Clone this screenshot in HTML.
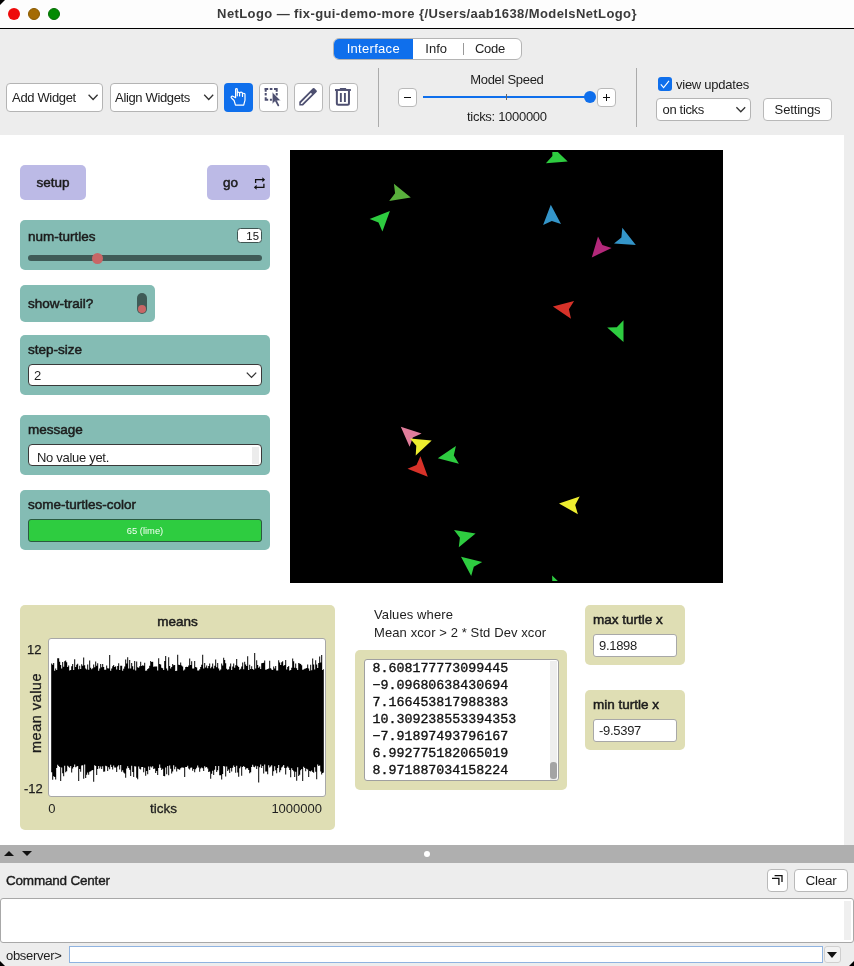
<!DOCTYPE html>
<html><head><meta charset="utf-8">
<style>
*{box-sizing:border-box;margin:0;padding:0}
html,body{-webkit-font-smoothing:antialiased;width:854px;height:966px;overflow:hidden;background:#ededed;font-family:"Liberation Sans",sans-serif;color:#1e1e1e}
.a{position:absolute}
#title{left:0;top:0;width:854px;height:29px;background:#fdfdfd;border-bottom:1px solid #000}
.dot{position:absolute;width:12px;height:12px;border-radius:50%;top:8px}
#ttl{left:0;width:854px;top:6px;text-align:center;font-weight:bold;font-size:13px;letter-spacing:0.4px;color:#3a3a3a}
.btn{position:absolute;background:#fff;border:1px solid #b9b9b9;border-radius:4px}
.sel{position:absolute;background:#fff;border:1px solid #b4b4b4;border-radius:4px;font-size:13.5px;color:#222}
.chev{position:absolute;width:7px;height:7px;border-right:1.5px solid #333;border-bottom:1.5px solid #333;transform:rotate(45deg)}
.vsep{position:absolute;width:1px;background:#ababab}
.txt{position:absolute;white-space:nowrap}
#iface{left:0;top:135px;width:844px;height:710px;background:#fff}
.w{position:absolute;border-radius:5px}
.teal{background:#84bcb4}
.lav{background:#bcbae6}
.beige{background:#dfdeb4}
.lbl{position:absolute;font-size:13.5px;-webkit-text-stroke:0.5px #1c1c1c;color:#1c1c1c;white-space:nowrap}
#root{position:absolute;left:0;top:0;width:854px;height:966px;will-change:transform}
</style></head><body><div id="root">
<div id="title" class="a">
  <div class="a" style="left:0;top:0;width:0;height:0;border-top:5px solid #000;border-right:5px solid transparent"></div>
  <div class="dot" style="left:8px;background:#ee0a0a"></div>
  <div class="dot" style="left:28px;background:#a46b04;border:1px solid #8a5a00"></div>
  <div class="dot" style="left:48px;background:#038a03;border:1px solid #066f06"></div>
  <div id="ttl" class="a">NetLogo — fix-gui-demo-more {/Users/aab1638/ModelsNetLogo}</div>
</div>

<!-- tabs -->
<div class="a" style="left:332.8px;top:37.8px;width:189px;height:22px;border:1px solid #b4b4b4;border-radius:6px;background:#fff;overflow:hidden">
  <div class="a" style="left:0;top:0;width:79px;height:20px;background:#0f6fec"></div>
  <div class="txt" style="left:0;width:79px;text-align:center;top:2.2px;font-size:13px;letter-spacing:0.3px;color:#fff">Interface</div>
  <div class="txt" style="left:77.4px;width:50px;text-align:center;top:2.2px;font-size:13px;color:#222">Info</div>
  <div class="a" style="left:129.3px;top:4.4px;width:1px;height:12.3px;background:#999"></div>
  <div class="txt" style="left:127.7px;width:57px;text-align:center;top:2.2px;font-size:13px;letter-spacing:-0.3px;color:#222">Code</div>
</div>

<!-- toolbar -->
<div class="sel" style="left:6.3px;top:83.2px;width:96.5px;height:28.5px"><span class="txt" style="left:4.8px;top:5.7px;font-size:13px;letter-spacing:-0.35px">Add Widget</span><svg class="a" style="left:0;top:0" width="96" height="28"><path d="M81.6,10.8 L86.1,15.5 L90.6,10.8" fill="none" stroke="#333" stroke-width="1.3"/></svg></div>
<div class="sel" style="left:109.5px;top:83.2px;width:108.3px;height:28.5px"><span class="txt" style="left:4.6px;top:5.7px;font-size:13px;letter-spacing:-0.35px">Align Widgets</span><svg class="a" style="left:0;top:0" width="108" height="28"><path d="M93.2,10.8 L97.7,15.5 L102.2,10.8" fill="none" stroke="#333" stroke-width="1.3"/></svg></div>
<div class="a" style="left:224px;top:83px;width:29px;height:29px;background:#0f6fec;border-radius:4px"></div>
<div class="btn" style="left:259px;top:83px;width:29px;height:29px"></div>
<div class="btn" style="left:294px;top:83px;width:29px;height:29px"></div>
<div class="btn" style="left:329px;top:83px;width:29px;height:29px"></div>
<svg class="a" style="left:224px;top:83px" width="29" height="29" viewBox="0 0 29 29">
<path d="M11.6,14.4 V6.5 A0.85,0.85 0 0 1 13.3,6.5 V12.8 M13.3,10.3 A1.15,1.15 0 0 1 15.6,10.3 V13 M15.6,10.6 A1.45,1.45 0 0 1 18.5,10.6 V13.5 M18.5,11.5 A1.25,1.25 0 0 1 21,11.5 V17.2 L19.7,22.2 H11.5 L10.1,17.5 L7.7,15.2 A1.05,1.05 0 0 1 8.9,13.3 L11.6,14.7" fill="none" stroke="#fff" stroke-width="1.2" stroke-linejoin="round" stroke-linecap="round"/>
</svg>
<svg class="a" style="left:259px;top:83px" width="29" height="29" viewBox="0 0 29 29">
<path d="M5.5,6.1 H9.2 M10.8,6.1 H13.4 M15,6.1 H18.7 M17.7,5.1 V8.8 M17.7,10.1 V12.6 M6.7,5.1 V8.8 M6.7,10.1 V12.6 M6.7,14.2 V17.8 M5.7,16.8 H9.2 M10.9,16.8 H13.1" fill="none" stroke="#4d4f70" stroke-width="2"/>
<path d="M13.3,9.1 L21.6,17.4 L16.5,18 L13.3,20.9 Z" fill="#4d4f70" stroke="#fff" stroke-width="0.5"/>
<path d="M17,18 L19.3,22.4" fill="none" stroke="#4d4f70" stroke-width="1.8" stroke-linecap="round"/>
</svg>
<svg class="a" style="left:294px;top:83px" width="29" height="29" viewBox="0 0 29 29">
<g transform="translate(5.3,22.6) rotate(-45)">
<path d="M0,0 L2.65,-2.65 H21.8 a1.1,1.1 0 0 1 1.1,1.1 V1.55 a1.1,1.1 0 0 1 -1.1,1.1 H2.65 Z" fill="#4d4f70"/>
<path d="M2.1,0 L3.0,-0.85 H17.2 V0.85 H3.0 Z" fill="#fff"/>
</g>
</svg>
<svg class="a" style="left:329px;top:83px" width="29" height="29" viewBox="0 0 29 29">
<path d="M6,7 H21.9" fill="none" stroke="#4d4f70" stroke-width="1.9"/>
<path d="M11.4,5.7 H16.6" fill="none" stroke="#4d4f70" stroke-width="1.3" stroke-linecap="round"/>
<path d="M7.85,7.5 V20.3 a1.5,1.5 0 0 0 1.5,1.5 H18.45 a1.5,1.5 0 0 0 1.5,-1.5 V7.5" fill="none" stroke="#4d4f70" stroke-width="2"/>
<path d="M11.85,10.1 V18.9 M15.9,10.1 V18.9" fill="none" stroke="#4d4f70" stroke-width="1.9"/>
</svg>
<div class="vsep" style="left:378px;top:68px;height:59px"></div>

<!-- speed -->
<div class="txt" style="left:456.9px;width:100px;text-align:center;top:72px;font-size:13px;letter-spacing:-0.3px">Model Speed</div>
<div class="btn" style="left:398px;top:88px;width:19px;height:19px"></div>
<div class="a" style="left:404.1px;top:96.6px;width:6.6px;height:1.2px;background:#111"></div>
<div class="btn" style="left:597px;top:88px;width:19px;height:19px"></div>
<div class="a" style="left:603.3px;top:97px;width:6.6px;height:1.2px;background:#111"></div>
<div class="a" style="left:606px;top:94.1px;width:1.2px;height:7px;background:#111"></div>
<div class="a" style="left:423px;top:96px;width:167px;height:2px;background:#0f6fec"></div>
<div class="a" style="left:506px;top:93.8px;width:1px;height:6.6px;background:#666"></div>
<div class="a" style="left:584px;top:91px;width:12px;height:12px;border-radius:50%;background:#0f6fec"></div>
<div class="txt" style="left:446.9px;width:120px;text-align:center;top:109.4px;font-size:13px;letter-spacing:-0.3px">ticks: 1000000</div>
<div class="vsep" style="left:636px;top:68px;height:59px"></div>

<!-- view updates -->
<div class="a" style="left:658px;top:77px;width:14px;height:14px;background:#0f6fec;border-radius:3px"></div>
<svg class="a" style="left:658px;top:77px" width="14" height="14"><path d="M2.8,7.3 L5.6,10.6 L11,3.8" fill="none" stroke="#fff" stroke-width="1.1"/></svg>
<div class="txt" style="left:676px;top:76.6px;font-size:13px;letter-spacing:-0.25px">view updates</div>
<div class="sel" style="left:656.3px;top:98px;width:94.5px;height:22.6px"><span class="txt" style="left:5.3px;top:3.3px;font-size:13px;letter-spacing:-0.35px">on ticks</span><svg class="a" style="left:0;top:0" width="94" height="22"><path d="M79.4,8.3 L83.8,12.8 L88.2,8.3" fill="none" stroke="#333" stroke-width="1.3"/></svg></div>
<div class="btn" style="left:763px;top:98px;width:69px;height:22.6px"><span class="txt" style="left:0;width:67px;text-align:center;top:3.3px;font-size:13px;letter-spacing:-0.15px">Settings</span></div>

<!-- interface area -->
<div id="iface" class="a"></div>

<!-- widgets -->
<div class="w lav" style="left:20px;top:165px;width:66px;height:35px"><span class="lbl" style="left:0;width:66px;text-align:center;top:10.3px">setup</span></div>
<div class="w lav" style="left:207px;top:165px;width:63px;height:35px"><span class="lbl" style="left:16px;top:10.3px">go</span>
<svg class="a" style="left:47px;top:12px" width="12" height="14"><path d="M1.6,6 V2.7 H9 M9.9,6.8 V10.3 H2" fill="none" stroke="#111" stroke-width="1.3"/><path d="M8.4,0.2 L11.1,2.7 L8.4,5.2 Z M2.6,7.8 L-0.1,10.3 L2.6,12.8 Z" fill="#111"/></svg></div>

<div class="w teal" style="left:20px;top:220px;width:250px;height:49.5px">
  <span class="lbl" style="left:8px;top:9.3px">num-turtles</span>
  <div class="a" style="left:217.3px;top:8.1px;width:24.3px;height:15.3px;background:#fff;border:1.2px solid #3f5552;border-radius:3.5px"><span class="txt" style="left:8px;top:0.8px;font-size:11.3px;letter-spacing:0.2px;color:#111">15</span></div>
  <div class="a" style="left:8px;top:35.4px;width:234px;height:5.2px;background:#3f5b57;border-radius:3px"></div>
  <div class="a" style="left:72px;top:33px;width:11px;height:11px;border-radius:50%;background:#c86666"></div>
</div>

<div class="w teal" style="left:20px;top:285px;width:135px;height:36.5px">
  <span class="lbl" style="left:8px;top:11px">show-trail?</span>
  <div class="a" style="left:117.2px;top:7.9px;width:9.5px;height:20.8px;background:#3f5b57;border-radius:5px"></div>
  <div class="a" style="left:117.8px;top:19.8px;width:8.5px;height:8.5px;border-radius:50%;background:#c86666"></div>
</div>

<div class="w teal" style="left:20px;top:335px;width:250px;height:59.5px">
  <span class="lbl" style="left:8px;top:7px">step-size</span>
  <div class="a" style="left:8px;top:29.3px;width:234px;height:22.2px;background:#fff;border:1px solid #3a3a3a;border-radius:4px"><span class="txt" style="left:5px;top:3px;font-size:13px">2</span><svg class="a" style="left:0;top:0" width="232" height="20"><path d="M217.8,7.6 L222.5,12.4 L227.2,7.6" fill="none" stroke="#333" stroke-width="1.3"/></svg></div>
</div>

<div class="w teal" style="left:20px;top:415px;width:250px;height:59.7px">
  <span class="lbl" style="left:8px;top:7px">message</span>
  <div class="a" style="left:8px;top:29.3px;width:234px;height:22px;background:#fff;border:1px solid #3a3a3a;border-radius:4px"><span class="txt" style="left:8px;top:4.5px;font-size:13px;letter-spacing:-0.3px">No value yet.</span><div class="a" style="left:223px;top:1.5px;width:7px;height:17px;background:#ececec"></div></div>
</div>

<div class="w teal" style="left:20px;top:490px;width:250px;height:59.5px">
  <span class="lbl" style="left:8px;top:7px">some-turtles-color</span>
  <div class="a" style="left:8px;top:29.3px;width:234px;height:22.5px;background:#2ecc40;border:1px solid #2a5a40;border-radius:3px"><span class="txt" style="left:0;width:232px;text-align:center;top:4.4px;font-size:9.4px;color:#f4fff4">65 (lime)</span></div>
</div>

<!-- view -->
<div class="a" style="left:290px;top:150px;width:433px;height:433px;background:#000;overflow:hidden">
<svg width="433" height="433" style="position:absolute;left:0;top:0">
<defs><clipPath id="wc"><rect x="2" y="2" width="429" height="429"/></clipPath></defs>
<g clip-path="url(#wc)">
<polygon points="277.7,11.6 262.1,-3.6 262.4,6.0 255.9,13.2" fill="#2ecc40"/>
<polygon points="277.7,440.6 262.1,425.4 262.4,435.0 255.9,442.2" fill="#2ecc40"/>
<polygon points="120.8,47.5 103.9,33.7 105.1,43.3 99.2,51.0" fill="#59b03c"/>
<polygon points="99.9,61.0 79.6,69.0 88.5,72.6 92.4,81.5" fill="#2ecc40"/>
<polygon points="260.8,54.7 253.1,75.1 261.8,70.9 271.0,74.0" fill="#3495c9"/>
<polygon points="301.8,107.4 321.6,98.1 312.4,95.1 308.0,86.5" fill="#b3287a"/>
<polygon points="345.8,95.0 332.3,77.8 331.4,87.4 324.0,93.6" fill="#3495c9"/>
<polygon points="262.9,156.4 281.0,168.7 278.9,159.2 284.1,151.1" fill="#d73229"/>
<polygon points="333.5,192.1 333.5,170.3 326.8,177.3 317.2,177.6" fill="#2ecc40"/>
<polygon points="110.8,276.7 119.6,296.7 122.8,287.6 131.6,283.5" fill="#e07d9b"/>
<polygon points="141.7,290.5 120.0,288.4 126.3,295.7 125.7,305.4" fill="#eded2f"/>
<polygon points="147.8,308.3 168.9,313.8 163.8,305.6 165.9,296.1" fill="#2ecc40"/>
<polygon points="137.8,326.8 130.4,306.3 126.5,315.1 117.5,318.7" fill="#d73229"/>
<polygon points="269.0,353.4 287.9,364.3 285.2,355.0 289.7,346.5" fill="#eded2f"/>
<polygon points="185.6,383.4 164.0,380.1 169.9,387.7 168.8,397.3" fill="#2ecc40"/>
<polygon points="171.0,406.8 181.2,426.1 183.8,416.8 192.2,412.0" fill="#2ecc40"/>

</g>
</svg>
</div>

<!-- plot -->
<div class="w beige" style="left:20px;top:605px;width:315px;height:225px"></div>
<span class="lbl" style="left:120px;width:115px;text-align:center;top:614px">means</span>
<div class="a" style="left:48px;top:638px;width:278px;height:159px;background:#fff;border:1px solid #a8a8a8;border-radius:3px"></div>
<svg class="a" style="left:0;top:0" width="854" height="966">
<polygon points="51.2,663.6 52.2,663.6 52.2,664.8 53.2,664.8 53.2,663.0 54.2,663.0 54.2,670.8 55.2,670.8 55.2,668.4 56.2,668.4 56.2,670.0 57.2,670.0 57.2,658.2 58.2,658.2 58.2,658.3 59.2,658.3 59.2,661.8 60.2,661.8 60.2,665.0 61.2,665.0 61.2,668.6 62.2,668.6 62.2,661.9 63.2,661.9 63.2,666.7 64.2,666.7 64.2,661.2 65.2,661.2 65.2,660.6 66.2,660.6 66.2,662.2 67.2,662.2 67.2,667.0 68.2,667.0 68.2,665.6 69.2,665.6 69.2,670.5 70.2,670.5 70.2,669.9 71.2,669.9 71.2,666.3 72.2,666.3 72.2,664.0 73.2,664.0 73.2,669.9 74.2,669.9 74.2,659.3 75.2,659.3 75.2,667.1 76.2,667.1 76.2,664.7 77.2,664.7 77.2,663.8 78.2,663.8 78.2,669.2 79.2,669.2 79.2,665.7 80.2,665.7 80.2,669.1 81.2,669.1 81.2,664.2 82.2,664.2 82.2,665.8 83.2,665.8 83.2,657.5 84.2,657.5 84.2,665.3 85.2,665.3 85.2,668.5 86.2,668.5 86.2,669.5 87.2,669.5 87.2,664.6 88.2,664.6 88.2,669.8 89.2,669.8 89.2,660.4 90.2,660.4 90.2,667.7 91.2,667.7 91.2,669.3 92.2,669.3 92.2,668.2 93.2,668.2 93.2,664.5 94.2,664.5 94.2,667.3 95.2,667.3 95.2,661.4 96.2,661.4 96.2,665.8 97.2,665.8 97.2,663.3 98.2,663.3 98.2,670.7 99.2,670.7 99.2,668.4 100.2,668.4 100.2,664.1 101.2,664.1 101.2,667.3 102.2,667.3 102.2,664.1 103.2,664.1 103.2,667.1 104.2,667.1 104.2,669.8 105.2,669.8 105.2,669.8 106.2,669.8 106.2,665.5 107.2,665.5 107.2,668.3 108.2,668.3 108.2,668.6 109.2,668.6 109.2,655.1 110.2,655.1 110.2,670.8 111.2,670.8 111.2,668.4 112.2,668.4 112.2,666.2 113.2,666.2 113.2,664.9 114.2,664.9 114.2,667.0 115.2,667.0 115.2,666.2 116.2,666.2 116.2,669.4 117.2,669.4 117.2,666.1 118.2,666.1 118.2,663.3 119.2,663.3 119.2,670.1 120.2,670.1 120.2,665.8 121.2,665.8 121.2,665.7 122.2,665.7 122.2,670.7 123.2,670.7 123.2,668.8 124.2,668.8 124.2,666.5 125.2,666.5 125.2,659.6 126.2,659.6 126.2,663.6 127.2,663.6 127.2,657.2 128.2,657.2 128.2,668.5 129.2,668.5 129.2,660.0 130.2,660.0 130.2,668.5 131.2,668.5 131.2,663.1 132.2,663.1 132.2,666.2 133.2,666.2 133.2,669.5 134.2,669.5 134.2,661.0 135.2,661.0 135.2,670.4 136.2,670.4 136.2,661.5 137.2,661.5 137.2,667.3 138.2,667.3 138.2,667.8 139.2,667.8 139.2,666.2 140.2,666.2 140.2,661.8 141.2,661.8 141.2,666.0 142.2,666.0 142.2,665.3 143.2,665.3 143.2,665.8 144.2,665.8 144.2,662.7 145.2,662.7 145.2,670.7 146.2,670.7 146.2,670.4 147.2,670.4 147.2,668.9 148.2,668.9 148.2,668.3 149.2,668.3 149.2,665.8 150.2,665.8 150.2,661.0 151.2,661.0 151.2,661.9 152.2,661.9 152.2,661.8 153.2,661.8 153.2,666.8 154.2,666.8 154.2,666.6 155.2,666.6 155.2,666.6 156.2,666.6 156.2,666.5 157.2,666.5 157.2,670.6 158.2,670.6 158.2,658.2 159.2,658.2 159.2,663.9 160.2,663.9 160.2,664.6 161.2,664.6 161.2,667.7 162.2,667.7 162.2,668.2 163.2,668.2 163.2,669.9 164.2,669.9 164.2,660.9 165.2,660.9 165.2,656.0 166.2,656.0 166.2,668.6 167.2,668.6 167.2,670.6 168.2,670.6 168.2,657.2 169.2,657.2 169.2,666.0 170.2,666.0 170.2,668.6 171.2,668.6 171.2,666.9 172.2,666.9 172.2,664.1 173.2,664.1 173.2,665.2 174.2,665.2 174.2,665.1 175.2,665.1 175.2,670.9 176.2,670.9 176.2,670.8 177.2,670.8 177.2,654.7 178.2,654.7 178.2,664.7 179.2,664.7 179.2,664.9 180.2,664.9 180.2,662.6 181.2,662.6 181.2,665.5 182.2,665.5 182.2,666.4 183.2,666.4 183.2,670.5 184.2,670.5 184.2,669.4 185.2,669.4 185.2,666.9 186.2,666.9 186.2,666.8 187.2,666.8 187.2,667.0 188.2,667.0 188.2,665.6 189.2,665.6 189.2,658.4 190.2,658.4 190.2,664.9 191.2,664.9 191.2,661.2 192.2,661.2 192.2,668.6 193.2,668.6 193.2,668.6 194.2,668.6 194.2,661.1 195.2,661.1 195.2,666.9 196.2,666.9 196.2,667.5 197.2,667.5 197.2,670.5 198.2,670.5 198.2,670.6 199.2,670.6 199.2,669.3 200.2,669.3 200.2,666.9 201.2,666.9 201.2,664.8 202.2,664.8 202.2,654.7 203.2,654.7 203.2,668.4 204.2,668.4 204.2,662.9 205.2,662.9 205.2,667.6 206.2,667.6 206.2,665.5 207.2,665.5 207.2,668.2 208.2,668.2 208.2,665.9 209.2,665.9 209.2,663.6 210.2,663.6 210.2,668.3 211.2,668.3 211.2,666.7 212.2,666.7 212.2,663.5 213.2,663.5 213.2,668.5 214.2,668.5 214.2,665.7 215.2,665.7 215.2,659.5 216.2,659.5 216.2,667.2 217.2,667.2 217.2,663.1 218.2,663.1 218.2,668.6 219.2,668.6 219.2,670.4 220.2,670.4 220.2,669.5 221.2,669.5 221.2,663.4 222.2,663.4 222.2,665.6 223.2,665.6 223.2,657.7 224.2,657.7 224.2,660.0 225.2,660.0 225.2,663.3 226.2,663.3 226.2,668.7 227.2,668.7 227.2,669.7 228.2,669.7 228.2,669.3 229.2,669.3 229.2,666.6 230.2,666.6 230.2,663.5 231.2,663.5 231.2,670.1 232.2,670.1 232.2,666.6 233.2,666.6 233.2,663.5 234.2,663.5 234.2,667.8 235.2,667.8 235.2,665.2 236.2,665.2 236.2,659.1 237.2,659.1 237.2,665.7 238.2,665.7 238.2,667.0 239.2,667.0 239.2,669.7 240.2,669.7 240.2,668.8 241.2,668.8 241.2,666.4 242.2,666.4 242.2,662.5 243.2,662.5 243.2,669.2 244.2,669.2 244.2,661.8 245.2,661.8 245.2,664.5 246.2,664.5 246.2,666.0 247.2,666.0 247.2,656.2 248.2,656.2 248.2,670.1 249.2,670.1 249.2,664.7 250.2,664.7 250.2,669.1 251.2,669.1 251.2,666.3 252.2,666.3 252.2,669.0 253.2,669.0 253.2,669.8 254.2,669.8 254.2,653.0 255.2,653.0 255.2,668.5 256.2,668.5 256.2,660.3 257.2,660.3 257.2,665.0 258.2,665.0 258.2,667.7 259.2,667.7 259.2,666.6 260.2,666.6 260.2,668.9 261.2,668.9 261.2,663.2 262.2,663.2 262.2,663.0 263.2,663.0 263.2,662.7 264.2,662.7 264.2,660.4 265.2,660.4 265.2,669.7 266.2,669.7 266.2,669.6 267.2,669.6 267.2,668.9 268.2,668.9 268.2,668.6 269.2,668.6 269.2,660.7 270.2,660.7 270.2,668.2 271.2,668.2 271.2,669.5 272.2,669.5 272.2,669.9 273.2,669.9 273.2,666.6 274.2,666.6 274.2,668.4 275.2,668.4 275.2,666.1 276.2,666.1 276.2,670.5 277.2,670.5 277.2,670.6 278.2,670.6 278.2,660.2 279.2,660.2 279.2,662.4 280.2,662.4 280.2,665.0 281.2,665.0 281.2,662.3 282.2,662.3 282.2,661.2 283.2,661.2 283.2,665.7 284.2,665.7 284.2,664.9 285.2,664.9 285.2,660.0 286.2,660.0 286.2,669.4 287.2,669.4 287.2,667.1 288.2,667.1 288.2,666.1 289.2,666.1 289.2,670.6 290.2,670.6 290.2,670.1 291.2,670.1 291.2,667.7 292.2,667.7 292.2,658.5 293.2,658.5 293.2,661.2 294.2,661.2 294.2,667.7 295.2,667.7 295.2,663.6 296.2,663.6 296.2,668.3 297.2,668.3 297.2,669.9 298.2,669.9 298.2,663.1 299.2,663.1 299.2,663.4 300.2,663.4 300.2,663.9 301.2,663.9 301.2,665.2 302.2,665.2 302.2,669.7 303.2,669.7 303.2,669.5 304.2,669.5 304.2,668.7 305.2,668.7 305.2,668.4 306.2,668.4 306.2,668.0 307.2,668.0 307.2,664.5 308.2,664.5 308.2,668.4 309.2,668.4 309.2,670.7 310.2,670.7 310.2,664.8 311.2,664.8 311.2,670.3 312.2,670.3 312.2,658.5 313.2,658.5 313.2,664.4 314.2,664.4 314.2,669.6 315.2,669.6 315.2,660.2 316.2,660.2 316.2,664.6 317.2,664.6 317.2,668.0 318.2,668.0 318.2,663.0 319.2,663.0 319.2,656.4 320.2,656.4 320.2,662.4 321.2,662.4 321.2,654.9 322.2,654.9 322.2,669.9 323.2,669.9 323.2,669.1 323.8,669.1 323.8,772.4 323.2,772.4 323.2,773.0 322.2,773.0 322.2,774.6 321.2,774.6 321.2,771.5 320.2,771.5 320.2,765.6 319.2,765.6 319.2,766.0 318.2,766.0 318.2,764.6 317.2,764.6 317.2,779.3 316.2,779.3 316.2,771.8 315.2,771.8 315.2,767.2 314.2,767.2 314.2,772.7 313.2,772.7 313.2,772.0 312.2,772.0 312.2,770.6 311.2,770.6 311.2,771.6 310.2,771.6 310.2,770.9 309.2,770.9 309.2,777.1 308.2,777.1 308.2,769.6 307.2,769.6 307.2,768.7 306.2,768.7 306.2,771.3 305.2,771.3 305.2,767.9 304.2,767.9 304.2,766.7 303.2,766.7 303.2,780.9 302.2,780.9 302.2,768.9 301.2,768.9 301.2,770.2 300.2,770.2 300.2,774.8 299.2,774.8 299.2,776.0 298.2,776.0 298.2,767.2 297.2,767.2 297.2,780.8 296.2,780.8 296.2,771.8 295.2,771.8 295.2,777.0 294.2,777.0 294.2,771.3 293.2,771.3 293.2,770.0 292.2,770.0 292.2,768.2 291.2,768.2 291.2,777.2 290.2,777.2 290.2,769.9 289.2,769.9 289.2,767.8 288.2,767.8 288.2,766.4 287.2,766.4 287.2,767.8 286.2,767.8 286.2,774.4 285.2,774.4 285.2,768.0 284.2,768.0 284.2,764.9 283.2,764.9 283.2,766.5 282.2,766.5 282.2,767.6 281.2,767.6 281.2,770.3 280.2,770.3 280.2,772.2 279.2,772.2 279.2,765.1 278.2,765.1 278.2,768.1 277.2,768.1 277.2,773.3 276.2,773.3 276.2,770.2 275.2,770.2 275.2,766.3 274.2,766.3 274.2,771.2 273.2,771.2 273.2,775.8 272.2,775.8 272.2,765.2 271.2,765.2 271.2,766.6 270.2,766.6 270.2,767.5 269.2,767.5 269.2,765.2 268.2,765.2 268.2,774.3 267.2,774.3 267.2,771.5 266.2,771.5 266.2,771.5 265.2,771.5 265.2,764.6 264.2,764.6 264.2,773.5 263.2,773.5 263.2,765.9 262.2,765.9 262.2,768.1 261.2,768.1 261.2,764.6 260.2,764.6 260.2,767.3 259.2,767.3 259.2,782.5 258.2,782.5 258.2,766.2 257.2,766.2 257.2,768.9 256.2,768.9 256.2,765.7 255.2,765.7 255.2,767.3 254.2,767.3 254.2,766.8 253.2,766.8 253.2,764.8 252.2,764.8 252.2,767.1 251.2,767.1 251.2,772.2 250.2,772.2 250.2,773.3 249.2,773.3 249.2,770.1 248.2,770.1 248.2,768.3 247.2,768.3 247.2,768.3 246.2,768.3 246.2,769.4 245.2,769.4 245.2,767.1 244.2,767.1 244.2,766.0 243.2,766.0 243.2,767.0 242.2,767.0 242.2,775.7 241.2,775.7 241.2,766.6 240.2,766.6 240.2,768.2 239.2,768.2 239.2,776.8 238.2,776.8 238.2,772.4 237.2,772.4 237.2,765.7 236.2,765.7 236.2,772.8 235.2,772.8 235.2,767.1 234.2,767.1 234.2,765.4 233.2,765.4 233.2,767.8 232.2,767.8 232.2,771.5 231.2,771.5 231.2,767.9 230.2,767.9 230.2,772.9 229.2,772.9 229.2,769.5 228.2,769.5 228.2,770.9 227.2,770.9 227.2,766.6 226.2,766.6 226.2,776.5 225.2,776.5 225.2,766.4 224.2,766.4 224.2,766.0 223.2,766.0 223.2,774.0 222.2,774.0 222.2,779.4 221.2,779.4 221.2,775.2 220.2,775.2 220.2,775.2 219.2,775.2 219.2,765.9 218.2,765.9 218.2,770.2 217.2,770.2 217.2,771.9 216.2,771.9 216.2,765.9 215.2,765.9 215.2,769.7 214.2,769.7 214.2,774.9 213.2,774.9 213.2,770.8 212.2,770.8 212.2,773.7 211.2,773.7 211.2,778.8 210.2,778.8 210.2,771.4 209.2,771.4 209.2,772.1 208.2,772.1 208.2,768.6 207.2,768.6 207.2,766.9 206.2,766.9 206.2,767.5 205.2,767.5 205.2,766.3 204.2,766.3 204.2,771.0 203.2,771.0 203.2,768.2 202.2,768.2 202.2,767.5 201.2,767.5 201.2,768.5 200.2,768.5 200.2,771.7 199.2,771.7 199.2,767.5 198.2,767.5 198.2,765.4 197.2,765.4 197.2,767.7 196.2,767.7 196.2,769.2 195.2,769.2 195.2,772.2 194.2,772.2 194.2,769.1 193.2,769.1 193.2,770.7 192.2,770.7 192.2,767.6 191.2,767.6 191.2,767.8 190.2,767.8 190.2,769.5 189.2,769.5 189.2,768.6 188.2,768.6 188.2,765.8 187.2,765.8 187.2,766.9 186.2,766.9 186.2,767.0 185.2,767.0 185.2,777.0 184.2,777.0 184.2,767.8 183.2,767.8 183.2,767.5 182.2,767.5 182.2,767.4 181.2,767.4 181.2,768.2 180.2,768.2 180.2,769.8 179.2,769.8 179.2,769.3 178.2,769.3 178.2,768.7 177.2,768.7 177.2,771.5 176.2,771.5 176.2,766.7 175.2,766.7 175.2,769.2 174.2,769.2 174.2,765.2 173.2,765.2 173.2,771.4 172.2,771.4 172.2,773.5 171.2,773.5 171.2,768.8 170.2,768.8 170.2,765.6 169.2,765.6 169.2,775.2 168.2,775.2 168.2,766.0 167.2,766.0 167.2,774.3 166.2,774.3 166.2,767.4 165.2,767.4 165.2,776.3 164.2,776.3 164.2,776.0 163.2,776.0 163.2,768.8 162.2,768.8 162.2,770.0 161.2,770.0 161.2,767.8 160.2,767.8 160.2,764.5 159.2,764.5 159.2,768.0 158.2,768.0 158.2,775.1 157.2,775.1 157.2,771.1 156.2,771.1 156.2,773.1 155.2,773.1 155.2,768.6 154.2,768.6 154.2,769.0 153.2,769.0 153.2,766.2 152.2,766.2 152.2,767.6 151.2,767.6 151.2,766.5 150.2,766.5 150.2,769.9 149.2,769.9 149.2,766.4 148.2,766.4 148.2,774.2 147.2,774.2 147.2,771.0 146.2,771.0 146.2,775.8 145.2,775.8 145.2,767.7 144.2,767.7 144.2,772.3 143.2,772.3 143.2,767.0 142.2,767.0 142.2,767.0 141.2,767.0 141.2,769.6 140.2,769.6 140.2,768.7 139.2,768.7 139.2,766.6 138.2,766.6 138.2,779.2 137.2,779.2 137.2,777.8 136.2,777.8 136.2,766.6 135.2,766.6 135.2,766.2 134.2,766.2 134.2,777.0 133.2,777.0 133.2,771.9 132.2,771.9 132.2,765.7 131.2,765.7 131.2,776.0 130.2,776.0 130.2,769.7 129.2,769.7 129.2,768.1 128.2,768.1 128.2,766.2 127.2,766.2 127.2,768.4 126.2,768.4 126.2,777.7 125.2,777.7 125.2,773.6 124.2,773.6 124.2,772.5 123.2,772.5 123.2,770.2 122.2,770.2 122.2,771.8 121.2,771.8 121.2,764.9 120.2,764.9 120.2,769.5 119.2,769.5 119.2,765.2 118.2,765.2 118.2,766.5 117.2,766.5 117.2,772.0 116.2,772.0 116.2,767.5 115.2,767.5 115.2,767.5 114.2,767.5 114.2,765.6 113.2,765.6 113.2,769.6 112.2,769.6 112.2,767.0 111.2,767.0 111.2,764.7 110.2,764.7 110.2,769.2 109.2,769.2 109.2,767.3 108.2,767.3 108.2,770.9 107.2,770.9 107.2,766.2 106.2,766.2 106.2,765.8 105.2,765.8 105.2,771.4 104.2,771.4 104.2,771.8 103.2,771.8 103.2,766.2 102.2,766.2 102.2,768.9 101.2,768.9 101.2,766.5 100.2,766.5 100.2,768.4 99.2,768.4 99.2,766.1 98.2,766.1 98.2,769.0 97.2,769.0 97.2,774.9 96.2,774.9 96.2,766.0 95.2,766.0 95.2,765.3 94.2,765.3 94.2,781.7 93.2,781.7 93.2,770.1 92.2,770.1 92.2,770.5 91.2,770.5 91.2,771.2 90.2,771.2 90.2,771.7 89.2,771.7 89.2,774.8 88.2,774.8 88.2,772.5 87.2,772.5 87.2,774.8 86.2,774.8 86.2,777.9 85.2,777.9 85.2,764.5 84.2,764.5 84.2,778.7 83.2,778.7 83.2,765.2 82.2,765.2 82.2,765.6 81.2,765.6 81.2,771.7 80.2,771.7 80.2,769.0 79.2,769.0 79.2,781.0 78.2,781.0 78.2,766.1 77.2,766.1 77.2,766.5 76.2,766.5 76.2,767.3 75.2,767.3 75.2,764.6 74.2,764.6 74.2,767.0 73.2,767.0 73.2,768.4 72.2,768.4 72.2,772.4 71.2,772.4 71.2,765.9 70.2,765.9 70.2,767.7 69.2,767.7 69.2,766.7 68.2,766.7 68.2,765.8 67.2,765.8 67.2,771.2 66.2,771.2 66.2,772.3 65.2,772.3 65.2,765.8 64.2,765.8 64.2,776.2 63.2,776.2 63.2,773.3 62.2,773.3 62.2,767.6 61.2,767.6 61.2,781.0 60.2,781.0 60.2,767.0 59.2,767.0 59.2,766.0 58.2,766.0 58.2,764.7 57.2,764.7 57.2,768.1 56.2,768.1 56.2,779.4 55.2,779.4 55.2,776.9 54.2,776.9 54.2,776.3 53.2,776.3 53.2,779.8 52.2,779.8 52.2,772.3 51.2,772.3" fill="#000"/>

</svg>
<span class="txt" style="left:27px;top:642px;font-size:13px;-webkit-text-stroke:0.25px #1e1e1e">12</span>
<span class="txt" style="left:24px;top:781px;font-size:13px;-webkit-text-stroke:0.25px #1e1e1e">-12</span>
<span class="lbl" style="left:-4.5px;top:705.4px;width:80px;text-align:center;font-size:14.5px;letter-spacing:0.5px;-webkit-text-stroke:0.3px #1c1c1c;transform:rotate(-90deg)">mean value</span>
<span class="txt" style="left:48.3px;top:801px;font-size:13px">0</span>
<span class="lbl" style="left:143.5px;width:40px;text-align:center;top:801px;-webkit-text-stroke:0.3px #1c1c1c">ticks</span>
<span class="txt" style="left:262px;width:60px;text-align:right;top:801px;font-size:13px">1000000</span>

<!-- note -->
<span class="txt" style="left:374px;top:607px;font-size:13px;letter-spacing:0.1px">Values where</span>
<span class="txt" style="left:374px;top:625px;font-size:13px;letter-spacing:0.1px">Mean xcor &gt; 2 * Std Dev xcor</span>

<!-- output -->
<div class="w beige" style="left:355px;top:650px;width:212px;height:140px"></div>
<div class="a" style="left:363.5px;top:658.5px;width:195px;height:122.5px;background:#fff;border:1px solid #a0a0a0;border-radius:3px;overflow:hidden">
  <div class="a" style="left:185px;top:1px;width:7px;height:120px;background:#eeeeee"></div>
  <div class="a" style="left:185.5px;top:102.5px;width:6.5px;height:16.5px;background:#a4a4a4;border-radius:3px"></div>
  <div class="a" style="left:8px;top:0px;font-family:'Liberation Mono',monospace;font-size:13.3px;-webkit-text-stroke:0.35px #111;line-height:17px;white-space:pre;color:#111">8.608177773099445
−9.09680638430694
7.166453817988383
10.309238553394353
−7.91897493796167
6.992775182065019
8.971887034158224</div>
</div>

<!-- monitors -->
<div class="w beige" style="left:585px;top:605px;width:100px;height:59.5px">
  <span class="lbl" style="left:8px;top:7.3px">max turtle x</span>
  <div class="a" style="left:8px;top:29.3px;width:84px;height:22.6px;background:#fff;border:1px solid #a8a8a8;border-radius:3px"><span class="txt" style="left:5px;top:3.2px;font-size:13px;letter-spacing:-0.3px">9.1898</span></div>
</div>
<div class="w beige" style="left:585px;top:690px;width:100px;height:59.5px">
  <span class="lbl" style="left:8px;top:7.3px">min turtle x</span>
  <div class="a" style="left:8px;top:29.3px;width:84px;height:22.6px;background:#fff;border:1px solid #a8a8a8;border-radius:3px"><span class="txt" style="left:5px;top:3.2px;font-size:13px;letter-spacing:-0.3px">-9.5397</span></div>
</div>

<!-- splitter -->
<div class="a" style="left:0;top:845px;width:854px;height:18px;background:#afafaf"></div>
<div class="a" style="left:4px;top:851px;width:0;height:0;border-left:5px solid transparent;border-right:5px solid transparent;border-bottom:5px solid #111"></div>
<div class="a" style="left:22px;top:851px;width:0;height:0;border-left:5px solid transparent;border-right:5px solid transparent;border-top:5px solid #111"></div>
<div class="a" style="left:424px;top:851px;width:6px;height:6px;border-radius:50%;background:#fff"></div>

<!-- command center -->
<span class="lbl" style="left:6px;top:873px;font-size:13.5px;letter-spacing:-0.2px;-webkit-text-stroke:0.4px #1c1c1c">Command Center</span>
<div class="btn" style="left:767px;top:869px;width:21px;height:23px"></div>
<svg class="a" style="left:767px;top:869px" width="21" height="23"><path d="M7.6,6.6 H15 V13 M5,9.3 H11.9 V15.9" fill="none" stroke="#111" stroke-width="1.3"/></svg>
<div class="btn" style="left:794px;top:869px;width:54px;height:23px"><span class="txt" style="left:0;width:52px;text-align:center;top:3.3px;font-size:13.5px;letter-spacing:-0.3px">Clear</span></div>
<div class="a" style="left:0;top:898px;width:854px;height:45px;background:#fff;border:1px solid #a8a8a8;border-radius:3px">
  <div class="a" style="left:843.2px;top:2.3px;width:7px;height:38.5px;background:#efefef"></div>
</div>
<span class="txt" style="left:6px;top:947.5px;font-size:13px;letter-spacing:-0.3px">observer&gt;</span>
<div class="a" style="left:69px;top:946px;width:754px;height:17px;background:#fff;border:1px solid #8fb3e0"></div>
<div class="a" style="left:823.8px;top:946px;width:17.7px;height:17px;background:#f2f2f2;border:1px solid #cfcfcf;border-radius:3px"></div>
<div class="a" style="left:827px;top:952px;width:0;height:0;border-left:5px solid transparent;border-right:5px solid transparent;border-top:6px solid #111"></div>
<div class="a" style="left:0;top:961px;width:0;height:0;border-bottom:5px solid #000;border-right:5px solid transparent"></div>
<div class="a" style="left:849px;top:961px;width:0;height:0;border-bottom:5px solid #000;border-left:5px solid transparent"></div>
</div></body></html>
